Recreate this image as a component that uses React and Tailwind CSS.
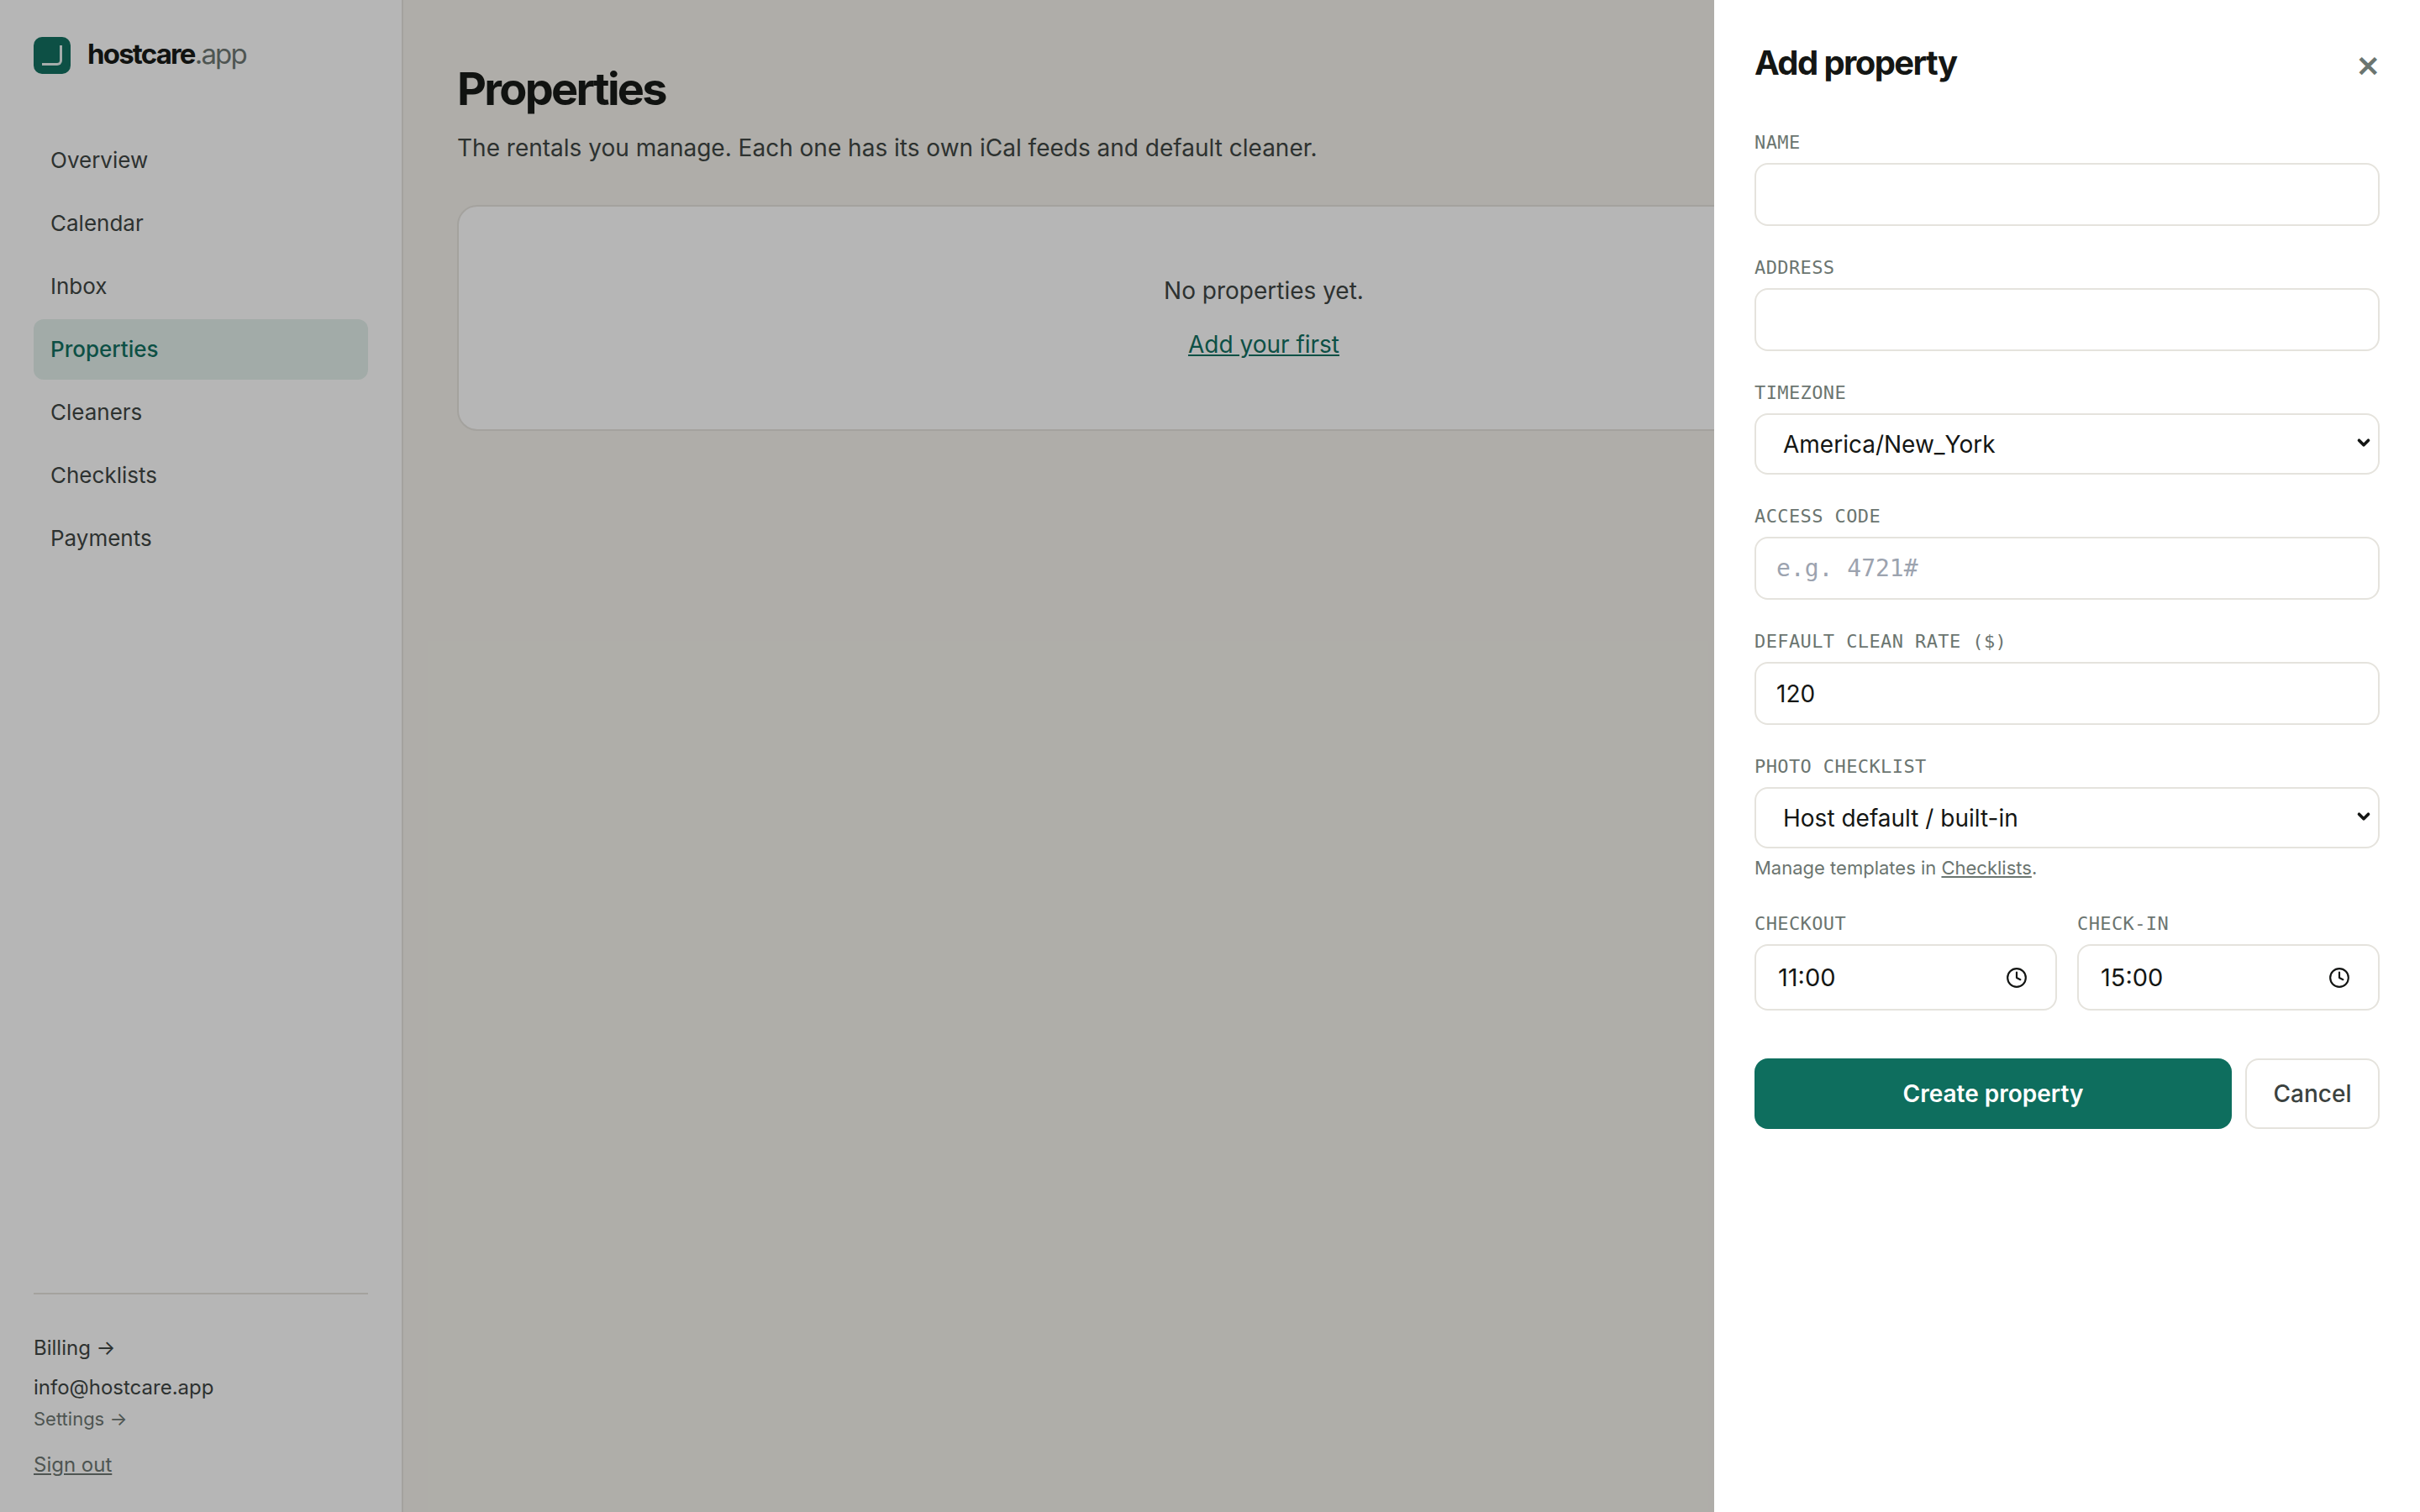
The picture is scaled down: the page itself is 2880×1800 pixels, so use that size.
import { Clock, ChevronDown } from 'lucide-react'

const navItems = ['Overview', 'Calendar', 'Inbox', 'Properties', 'Cleaners', 'Checklists', 'Payments']

function Label({ children }) {
  return (
    <label className="block h-[30px] mb-3 font-['DejaVu_Sans_Mono',monospace] text-[22px] leading-[36px] tracking-[0.4px] text-[#6b7570]">
      {children}
    </label>
  )
}

function TextField({ label, value, placeholder, mono }) {
  return (
    <div>
      <Label>{label}</Label>
      <input
        readOnly
        value={value || ''}
        placeholder={placeholder}
        className={`block w-full h-[75px] px-6 bg-white border-2 border-[#e5e3dd] rounded-[16px] outline-none text-[#141614] placeholder:text-[#9ca3af] ${
          mono ? "font-['DejaVu_Sans_Mono',monospace] text-[28px]" : 'text-[28px]'
        }`}
      />
    </div>
  )
}

function SelectField({ label, value }) {
  return (
    <div>
      <Label>{label}</Label>
      <div className="relative">
        <select
          value={value}
          onChange={() => {}}
          className="block w-full h-[73px] pl-[32px] pr-12 bg-white border-2 border-[#e5e3dd] rounded-[16px] outline-none appearance-none text-[28px] text-[#141614]"
        >
          <option>{value}</option>
        </select>
        <ChevronDown size={22} strokeWidth={4} className="absolute right-[8px] top-[24px] text-[#141614]" />
      </div>
    </div>
  )
}

function TimeField({ label, value }) {
  return (
    <div>
      <Label>{label}</Label>
      <div className="relative">
        <input
          readOnly
          value={value}
          className="block w-full h-[79px] pl-[26px] pr-6 bg-white border-2 border-[#e5e3dd] rounded-[16px] outline-none text-[29px] text-[#141614]"
        />
        <Clock size={26} strokeWidth={2} className="absolute right-[35px] top-[27px] text-[#141614]" />
      </div>
    </div>
  )
}

export default function App() {
  return (
    <div className="relative flex h-screen w-full overflow-hidden bg-[#f5f3ec] font-['Inter',sans-serif] text-[#141614]">
      {/* Sidebar */}
      <aside className="flex w-[480px] shrink-0 flex-col border-r-2 border-[#e5e3dd] bg-white px-10 pt-11 pb-[37px]">
        <div className="flex items-center gap-5 h-11">
          <div className="flex h-11 w-11 items-center justify-center rounded-[10px] bg-[#0e6e5e]">
            <div className="h-6 w-6 rounded-br-[6px] border-r-[3px] border-b-[3px] border-white/90" />
          </div>
          <div className="-mt-[3px] text-[33px] font-bold tracking-[-0.055em]">
            hostcare<span className="font-normal text-[#6b7570]">.app</span>
          </div>
        </div>
        <nav className="mt-[67px] flex flex-col gap-[3px]">
          {navItems.map((item) => (
            <a
              key={item}
              className={`flex h-[72px] items-center rounded-[12px] px-5 pb-[2px] text-[26px] ${
                item === 'Properties' ? 'bg-[#e3f0eb] font-medium text-[#0e6e5e]' : 'text-[#3b423f]'
              }`}
            >
              {item}
            </a>
          ))}
        </nav>
        <div className="mt-auto border-t-2 border-[#e5e3dd] pt-11">
          <div className="text-[24px] leading-[39px] text-[#3b423f]">Billing →</div>
          <div className="mt-2 text-[24px] leading-[39px] text-[#3b423f]">info@hostcare.app</div>
          <div className="text-[22px] leading-[36px] text-[#6b7570]">Settings →</div>
          <div className="mt-[17px] text-[24px] leading-[39px] text-[#6b7570] underline">Sign out</div>
        </div>
      </aside>

      {/* Main */}
      <main className="flex-1 pl-16 pt-[72px]">
        <div className="w-[1920px]">
          <h1 className="text-[54px] font-bold leading-[67px] tracking-[-0.05em]">Properties</h1>
          <p className="mt-[15px] text-[28px] leading-[45px] text-[#3b423f]">
            The rentals you manage. Each one has its own iCal feeds and default cleaner.
          </p>
          <div className="mt-[45px] rounded-[24px] border-2 border-[#e5e3dd] bg-white pt-[79px] pb-[80px] text-center text-[28px] leading-[42px]">
            <p className="text-[#3b423f]">No properties yet.</p>
            <p className="mt-[22px]">
              <a className="text-[#0e6e5e] underline">Add your first</a>
            </p>
          </div>
        </div>
      </main>

      {/* Backdrop */}
      <div className="absolute inset-0 bg-[#0c0c0c]/30" />

      {/* Add property drawer */}
      <div className="absolute inset-y-0 right-0 w-[840px] bg-white px-12 pt-12">
        <div className="flex items-center justify-between h-[54px]">
          <h2 className="text-[40px] font-bold tracking-[-0.04em]">Add property</h2>
          <span className="text-[34px] leading-none mt-2 font-bold text-[#6b7570]">✕</span>
        </div>
        <div className="mt-[50px] flex flex-col gap-8">
          <TextField label="NAME" />
          <TextField label="ADDRESS" />
          <SelectField label="TIMEZONE" value="America/New_York" />
          <TextField label="ACCESS CODE" placeholder="e.g. 4721#" mono />
          <TextField label="DEFAULT CLEAN RATE ($)" value="120" />
          <div>
            <SelectField label="PHOTO CHECKLIST" value="Host default / built-in" />
            <p className="mt-[7px] text-[22px] leading-[33px] text-[#6b7570]">
              Manage templates in <a className="underline">Checklists</a>.
            </p>
          </div>
          <div className="grid grid-cols-2 gap-6">
            <TimeField label="CHECKOUT" value="11:00" />
            <TimeField label="CHECK-IN" value="15:00" />
          </div>
        </div>
        <div className="mt-[57px] flex gap-4">
          <button className="h-[84px] flex-1 rounded-[16px] bg-[#0e6e5e] text-[28px] font-semibold text-white">
            Create property
          </button>
          <button className="h-[84px] w-[160px] rounded-[16px] border-2 border-[#e5e3dd] bg-white text-[28px] font-medium text-[#3b423f]">
            Cancel
          </button>
        </div>
      </div>
    </div>
  )
}
